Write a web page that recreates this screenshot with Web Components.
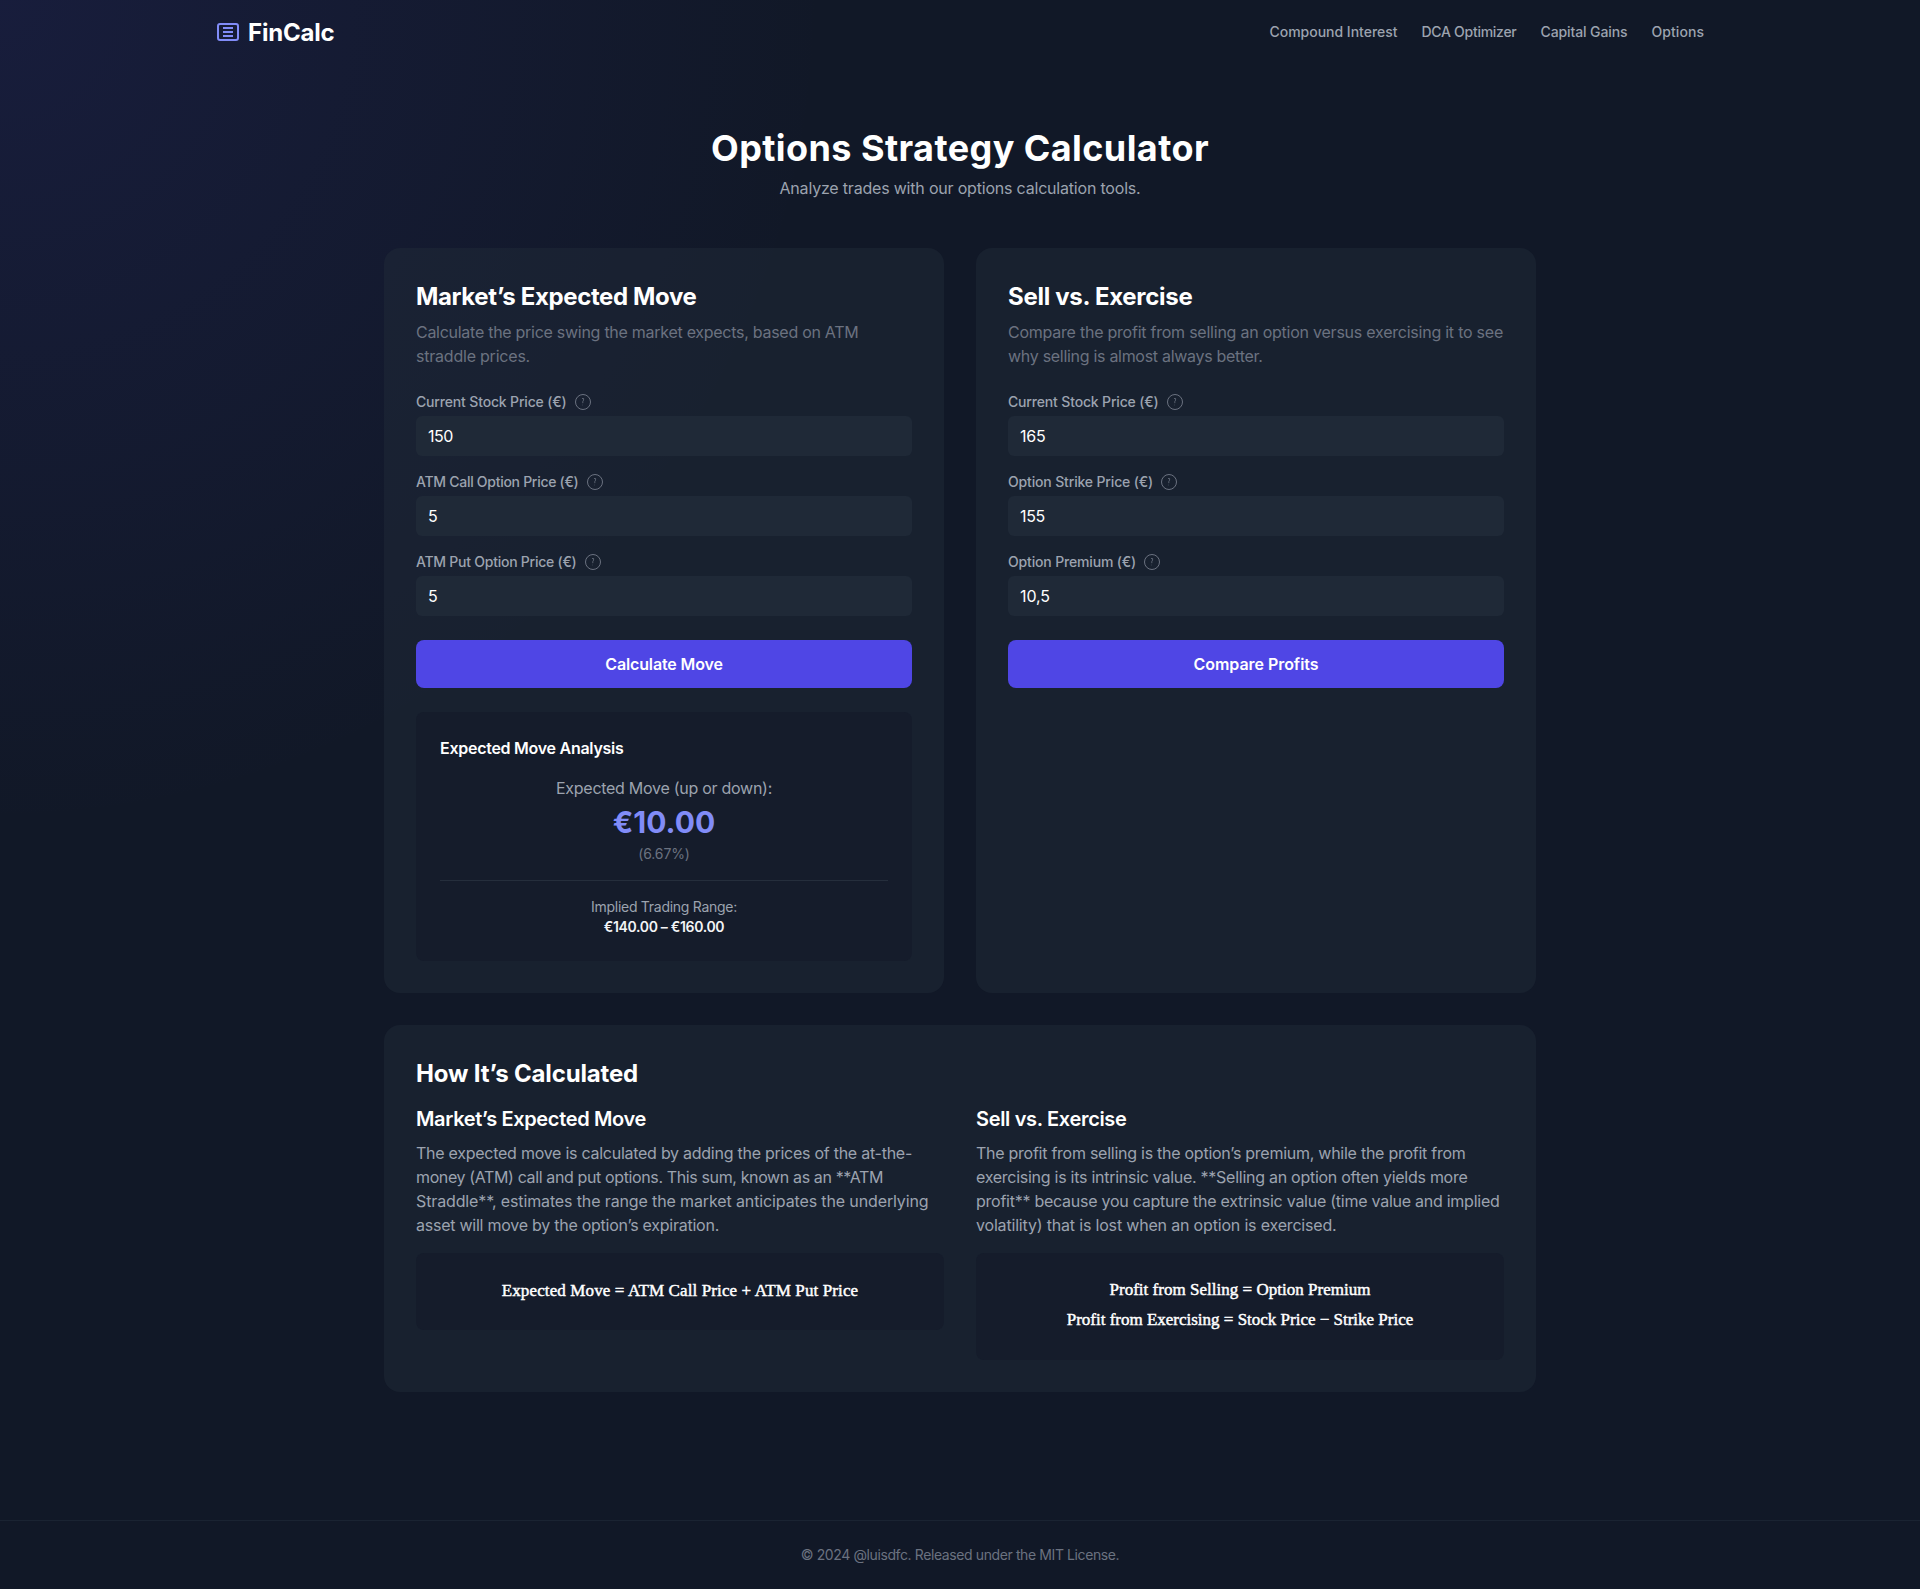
<!DOCTYPE html>
<html lang="en">
<head>
<meta charset="utf-8">
<title>FinCalc – Options Strategy Calculator</title>
<style>
  html { background: #111827; }
  body {
    margin: 0; min-height: 1589px; color: #fff;
    font: 16px/24px Inter, "Liberation Sans", sans-serif;
    background: radial-gradient(circle at 0 0, rgba(79, 70, 229, .11), rgba(79, 70, 229, 0) 830px) #111827;
  }
</style>
</head>
<body>
<fc-app></fc-app>
<script>
const define = (name, html, setup) => customElements.define(name, class extends HTMLElement {
  connectedCallback() {
    if (this.shadowRoot) return;
    const t = document.createElement('template');
    t.innerHTML = html;
    this.attachShadow({ mode: 'open' }).append(t.content.cloneNode(true));
    if (setup) setup(this, this.shadowRoot);
  }
});

/* One line of text whose tracking is adjusted so that it takes the width given in "w". */
define('fc-line', `<style>
  :host { display: inline-block; white-space: nowrap; vertical-align: top; }
</style><slot></slot>`, el => {
  const w = parseFloat(el.getAttribute('w'));
  const n = [...el.textContent].length;
  const spacing = (w - el.getBoundingClientRect().width) / n;
  el.style.letterSpacing = spacing.toFixed(4) + 'px';
});

define('fc-logo', `<style>
  :host { display: flex; align-items: center; gap: 8px; font-size: 24px; line-height: 32px; font-weight: 700; }
  svg { display: block; width: 24px; height: 24px; }
  fc-line { padding-top: 1px; }
</style>
<svg viewBox="0 0 24 24" fill="none" stroke="#818cf8" stroke-width="2"><rect x="2" y="4" width="20" height="16" rx="2"/><path d="M7 8h10M7 12h10M7 16h10"/></svg>
<fc-line w="86.5">FinCalc</fc-line>`);

define('fc-header', `<style>
  :host { display: flex; justify-content: space-between; align-items: center; height: 64px; width: 1488px; margin: 0 auto; }
  nav { display: flex; gap: 24px; font-size: 14px; line-height: 20px; font-weight: 500; color: #9ca3af; }
</style>
<fc-logo></fc-logo>
<nav><fc-line w="128">Compound Interest</fc-line><fc-line w="95">DCA Optimizer</fc-line><fc-line w="87">Capital Gains</fc-line><fc-line w="52.5">Options</fc-line></nav>`);

define('fc-hero', `<style>
  :host { display: flex; flex-direction: column; align-items: center; padding-top: 64px; }
  h1 { margin: 0; font-size: 36px; line-height: 40px; font-weight: 700; }
  p { margin: 8px 0 0; color: #9ca3af; }
</style>
<h1><fc-line w="498">Options Strategy Calculator</fc-line></h1>
<p><fc-line w="361">Analyze trades with our options calculation tools.</fc-line></p>`);

define('fc-card', `<style>
  :host { display: flex; flex-direction: column; box-sizing: border-box; padding: 32px; border-radius: 16px; background: rgba(31, 41, 55, .5); }
  h2 { margin: 0; height: 31px; padding-top: 1px; font-size: 24px; line-height: 32px; font-weight: 700; }
</style>
<h2><slot name="title"></slot></h2><slot></slot>`);

define('fc-intro', `<style>
  :host { display: flex; flex-direction: column; align-items: flex-start; margin: 8px 0 24px; color: #6b7280; }
</style><slot></slot>`);

define('fc-help', `<style>
  :host { display: block; width: 16px; height: 16px; }
  svg { display: block; }
</style>
<svg width="16" height="16" viewBox="0 0 16 16" fill="none" stroke="#6b7280"><circle cx="8" cy="8" r="7.5"/><path d="M7 4.5h1.6v1.6L7.8 7.6v1.6" stroke-width=".8"/><path d="M7.4 10.6v.8" stroke-width=".5"/></svg>`);

define('fc-field', `<style>
  :host { display: block; margin-bottom: 16px; }
  .label { display: flex; align-items: center; gap: 8px; height: 20px; margin-bottom: 4px; font-size: 14px; line-height: 20px; font-weight: 500; color: #9ca3af; }
  .box { display: flex; align-items: center; height: 40px; padding: 0 12px; border-radius: 6px; background: #1f2937; }
</style>
<div class="label"><slot name="label"></slot><fc-help></fc-help></div>
<div class="box"><slot></slot></div>`);

define('fc-button', `<style>
  :host { display: flex; align-items: center; justify-content: center; height: 48px; margin-top: 8px; border-radius: 8px; background: #4f46e5; font-weight: 600; }
</style><slot></slot>`);

define('fc-result', `<style>
  :host { display: flex; flex-direction: column; align-items: center; margin-top: 24px; padding: 24px; border-radius: 8px; background: #151c2b; color: #9ca3af; }
  h3 { align-self: flex-start; margin: 0 0 16px; font-size: 16px; line-height: 24px; font-weight: 600; color: #fff; }
  .value { margin: 4px 0; font-size: 30px; line-height: 36px; font-weight: 700; color: #818cf8; }
  .small { font-size: 14px; line-height: 20px; }
  .dim { color: #6b7280; }
  .rule { align-self: stretch; height: 1px; margin: 16px 0; background: #252e3c; }
  .range { font-weight: 600; color: #f3f4f6; }
</style>
<h3><fc-line w="183.5">Expected Move Analysis</fc-line></h3>
<fc-line w="216">Expected Move (up or down):</fc-line>
<div class="value"><fc-line w="102.5">€10.00</fc-line></div>
<div class="small dim"><fc-line w="51.5">(6.67%)</fc-line></div>
<div class="rule"></div>
<div class="small"><fc-line w="146">Implied Trading Range:</fc-line></div>
<div class="small range"><fc-line w="120.5">€140.00 – €160.00</fc-line></div>`);

define('fc-method', `<style>
  :host { display: flex; flex-direction: column; flex: 1 1 0; }
  h3 { margin: 0; font-size: 20px; line-height: 28px; font-weight: 600; }
  .text { display: flex; flex-direction: column; align-items: flex-start; margin: 8px 0 16px; color: #9ca3af; }
</style>
<h3><slot name="title"></slot></h3><div class="text"><slot></slot></div><slot name="formula"></slot>`);

define('fc-formula', `<style>
  :host { display: flex; flex-direction: column; align-items: center; box-sizing: border-box; padding-top: 22px; line-height: 30px; border-radius: 8px; background: #151c2b;
    font-family: "Liberation Serif", "Times New Roman", serif; font-size: 17px; -webkit-text-stroke: .45px #fff; }
  :host([rows="1"]) { height: 77px; padding-top: 23px; }
  :host([rows="2"]) { height: 107px; }
</style><slot></slot>`);

define('fc-footer', `<style>
  :host { display: flex; justify-content: center; padding: 24px 0; border-top: 1px solid #1a2332; font-size: 14px; line-height: 20px; color: #6b7280; }
</style><fc-line w="318.5">© 2024 @luisdfc. Released under the MIT License.</fc-line>`);

define('fc-app', `<style>
  :host { display: flex; flex-direction: column; min-height: 1589px; }
  main { display: flex; flex-direction: column; gap: 32px; width: 1152px; margin: 48px auto 128px; }
  .row { display: flex; gap: 32px; }
  .row > fc-card { flex: 1 1 0; }
  .methods { display: flex; gap: 32px; margin-top: 16px; }
</style>
<fc-header></fc-header>
<fc-hero></fc-hero>
<main>
  <div class="row">
    <fc-card>
      <fc-line slot="title" w="280.5">Market’s Expected Move</fc-line>
      <fc-intro><fc-line w="442.5">Calculate the price swing the market expects, based on ATM</fc-line><fc-line w="114">straddle prices.</fc-line></fc-intro>
      <fc-field><fc-line slot="label" w="150.5">Current Stock Price (€)</fc-line><fc-line w="25">150</fc-line></fc-field>
      <fc-field><fc-line slot="label" w="162.5">ATM Call Option Price (€)</fc-line><fc-line w="9.5">5</fc-line></fc-field>
      <fc-field><fc-line slot="label" w="160.5">ATM Put Option Price (€)</fc-line><fc-line w="9.5">5</fc-line></fc-field>
      <fc-button><fc-line w="117.5">Calculate Move</fc-line></fc-button>
      <fc-result></fc-result>
    </fc-card>
    <fc-card>
      <fc-line slot="title" w="184.5">Sell vs. Exercise</fc-line>
      <fc-intro><fc-line w="495">Compare the profit from selling an option versus exercising it to see</fc-line><fc-line w="254.5">why selling is almost always better.</fc-line></fc-intro>
      <fc-field><fc-line slot="label" w="150.5">Current Stock Price (€)</fc-line><fc-line w="25.5">165</fc-line></fc-field>
      <fc-field><fc-line slot="label" w="145">Option Strike Price (€)</fc-line><fc-line w="25">155</fc-line></fc-field>
      <fc-field><fc-line slot="label" w="128">Option Premium (€)</fc-line><fc-line w="30">10,5</fc-line></fc-field>
      <fc-button><fc-line w="125">Compare Profits</fc-line></fc-button>
    </fc-card>
  </div>
  <fc-card>
    <fc-line slot="title" w="222">How It’s Calculated</fc-line>
    <div class="methods">
      <fc-method>
        <fc-line slot="title" w="230">Market’s Expected Move</fc-line>
        <fc-line w="496">The expected move is calculated by adding the prices of the at-the-</fc-line>
        <fc-line w="467">money (ATM) call and put options. This sum, known as an **ATM</fc-line>
        <fc-line w="512.5">Straddle**, estimates the range the market anticipates the underlying</fc-line>
        <fc-line w="303">asset will move by the option’s expiration.</fc-line>
        <fc-formula slot="formula" rows="1"><fc-line w="356.5">Expected Move = ATM Call Price + ATM Put Price</fc-line></fc-formula>
      </fc-method>
      <fc-method>
        <fc-line slot="title" w="150.5">Sell vs. Exercise</fc-line>
        <fc-line w="489.5">The profit from selling is the option’s premium, while the profit from</fc-line>
        <fc-line w="491.5">exercising is its intrinsic value. **Selling an option often yields more</fc-line>
        <fc-line w="523.5">profit** because you capture the extrinsic value (time value and implied</fc-line>
        <fc-line w="360.5">volatility) that is lost when an option is exercised.</fc-line>
        <fc-formula slot="formula" rows="2"><fc-line w="261">Profit from Selling = Option Premium</fc-line><fc-line w="346.5">Profit from Exercising = Stock Price − Strike Price</fc-line></fc-formula>
      </fc-method>
    </div>
  </fc-card>
</main>
<fc-footer></fc-footer>`);
</script>
</body>
</html>
